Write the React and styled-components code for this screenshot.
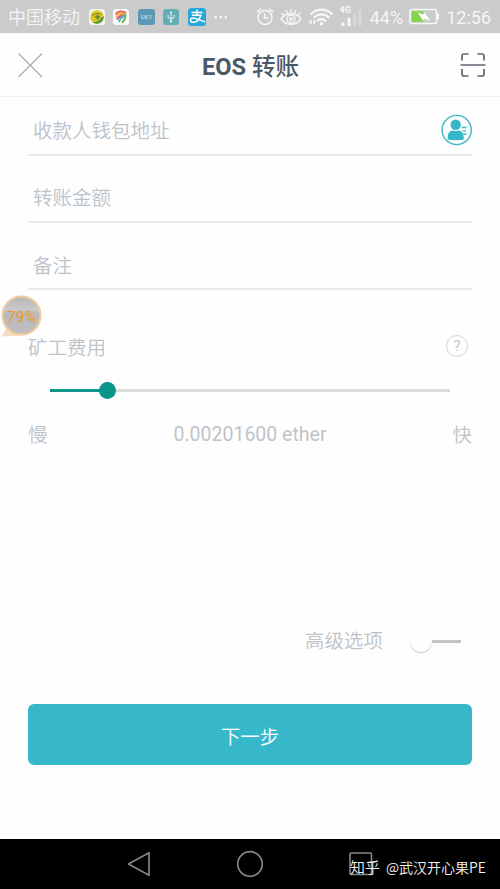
import React, { useState } from 'react';
import styled, { createGlobalStyle } from 'styled-components';

const GlobalStyle = createGlobalStyle`
  * {
    box-sizing: border-box;
  }

  body {
    margin: 0;
    background-color: #fefefe;
    font-family: Roboto, 'Noto Sans CJK SC', sans-serif;
  }
`;

const Screen = styled.div`
  position: relative;
  display: flex;
  flex-direction: column;
  width: 500px;
  height: 889px;
  overflow: hidden;
  background-color: #fefefe;
`;

const StatusBar = styled.div`
  display: flex;
  justify-content: space-between;
  height: 33px;
  padding: 0 9px 0 8px;
  background-color: #cbcbcb;
  color: #f5f5f5;
  font-size: 18px;
  line-height: 34px;
  white-space: nowrap;
`;

const StatusGroup = styled.div`
  display: flex;
  align-items: center;
  gap: ${(props) => props.$gap}px;
`;

const StatusText = styled.span`
  height: 33px;
  padding-top: ${(props) => props.$top || 0}px;
  font-weight: ${(props) => props.$weight || 400};
`;

const Header = styled.header`
  display: flex;
  align-items: center;
  justify-content: space-between;
  height: 64px;
  padding: 0 14px 0 17px;
  border-bottom: 1px solid #f0f0f0;
`;

const Title = styled.h1`
  margin: 0;
  padding: 4px 2px 0 0;
  color: #4a5867;
  font-size: 23.6px;
  font-weight: 700;
  line-height: 34px;
`;

const TitleText = styled.span`
  font-weight: 500;
`;

const IconButton = styled.button`
  display: flex;
  padding: 0;
  border: none;
  background: none;
  cursor: pointer;
`;

const Form = styled.form`
  display: flex;
  flex-direction: column;
  flex: 1;
  padding: 0 28px;
`;

const FieldRow = styled.div`
  display: flex;
  align-items: center;
  height: ${(props) => props.$height}px;
  padding: ${(props) => props.$top || 18}px 0 0 5px;
  border-bottom: 2px solid #e9eaec;
`;

const InputField = styled.input`
  flex: 1;
  min-width: 0;
  height: 32px;
  padding: 2px 0 0;
  border: none;
  outline: none;
  background: transparent;
  color: #465565;
  font-family: inherit;
  font-size: 19.5px;

  &::placeholder {
    color: #bac2ca;
    font-weight: 350;
    opacity: 1;
  }
`;

const FeeHeader = styled.div`
  display: flex;
  align-items: center;
  justify-content: space-between;
  height: 30px;
  margin-top: 42px;
  padding-right: 4px;
`;

const Label = styled.span`
  color: #bfc3c8;
  font-size: 19.5px;
  font-weight: ${(props) => props.$weight || 350};
  line-height: 30px;
  padding-top: ${(props) => props.$top || 0}px;
`;

const HelpButton = styled.button`
  display: flex;
  align-items: center;
  justify-content: center;
  width: 22px;
  height: 22px;
  margin-top: -3px;
  padding: 0;
  border: 1px solid #d3d5d7;
  border-radius: 50%;
  background: none;
  color: #c4c7ca;
  font-family: inherit;
  font-size: 15px;
  line-height: 20px;
`;

const Slider = styled.div`
  display: flex;
  align-items: center;
  height: 18px;
  margin: 19px 22px 0;
`;

const SliderFill = styled.div`
  height: 3px;
  background-color: #0b9488;
`;

const SliderThumb = styled.div`
  flex: none;
  width: 17px;
  height: 17px;
  margin: 0 -8px;
  border-radius: 50%;
  background-color: #0b9488;
  z-index: 1;
`;

const SliderRest = styled.div`
  flex: 1;
  height: 3px;
  background-color: #dadbdb;
`;

const FeeScale = styled.div`
  display: flex;
  justify-content: space-between;
  height: 32px;
  margin-top: 21px;
`;

const AdvancedRow = styled.div`
  display: flex;
  align-items: center;
  justify-content: flex-end;
  gap: 27px;
  height: 30px;
  margin-top: 174px;
  padding-right: 11px;
`;

const Toggle = styled.div`
  display: flex;
  align-items: center;
`;

const ToggleKnob = styled.div`
  width: 22px;
  height: 22px;
  border-radius: 50%;
  background-color: #fefefe;
  box-shadow: 0 1px 1px rgba(0, 0, 0, 0.22);
`;

const ToggleTrack = styled.div`
  width: 29px;
  height: 3px;
  background-color: #c4c4c4;
`;

const SubmitButton = styled.button`
  height: 61px;
  margin-top: 48px;
  padding: 1px 0 0;
  border: none;
  border-radius: 6px;
  background-color: #37b8ca;
  color: #fff;
  font-family: inherit;
  font-size: 19.4px;
  font-weight: 350;
  cursor: pointer;
`;

const NavBar = styled.nav`
  display: flex;
  align-items: center;
  justify-content: space-between;
  height: 50px;
  padding: 0 127px;
  background-color: #000;
`;

const Watermark = styled.div`
  position: absolute;
  right: 14px;
  bottom: 11px;
  display: flex;
  gap: 6px;
  color: #f4f4f4;
  font-family: 'Noto Sans CJK SC', sans-serif;
  font-size: 14px;
  font-weight: 350;
  line-height: 22px;
  white-space: nowrap;
`;

const WatermarkBrand = styled.span`
  font-size: 15px;
`;

const Bubble = styled.div`
  position: absolute;
  top: 295px;
  left: 1px;
  width: 42px;
  height: 42px;
`;

const BubbleText = styled.span`
  position: absolute;
  top: 12px;
  left: 6px;
  color: #f09a1c;
  font-size: 15.5px;
  line-height: 20px;
`;

const AppIcons = () => (
  <>
    <svg width="16" height="16" viewBox="0 0 16 16">
      <rect width="16" height="16" rx="3.5" fill="#f6f5ea" />
      <circle cx="8" cy="8" r="6.7" fill="#dcc62c" />
      <path d="M14.600 7A6.700 6.700 0 0 1 3 12.500C6 14 10.500 12 11.500 9.500z" fill="#4f9a48" />
      <path d="M3.500 7C5 4 10.500 3.300 12.500 6" fill="none" stroke="#8a9d2a" strokeWidth="1.300" />
      <path d="M8.500 5.500v5M6 8h5" stroke="#55832c" strokeWidth="1.600" />
    </svg>
    <svg width="16" height="16" viewBox="0 0 16 16" fill="none" strokeWidth="2">
      <rect width="16" height="16" rx="3.500" fill="#fafafa" />
      <path d="M2.500 5.500C5 2 9.500 1.500 13 4" stroke="#ee5f42" />
      <path d="M3 8c2-2.500 5.500-3.700 9-3" stroke="#f3b03c" />
      <path d="M4 10.500c1.500-2.500 4-4 7-4.500" stroke="#dc5078" />
      <path d="M6 13c.5-2.500 2.500-5 5.500-6.500" stroke="#4fb2d8" />
      <path d="M9 13.500c2-1.500 3.500-4.500 3.500-8.500" stroke="#62b950" />
    </svg>
    <svg width="17" height="16" viewBox="0 0 17 16">
      <rect width="17" height="16" rx="3" fill="#5b99b9" />
      <text x="8.500" y="9.900" textAnchor="middle" fontSize="5.800" fontFamily="Roboto" fontWeight="700" fill="#c5dfea">LV.1</text>
    </svg>
    <svg width="16" height="16" viewBox="0 0 16 16" fill="none" stroke="#e8f5f5">
      <rect width="16" height="16" rx="3" fill="#62adb3" stroke="none" />
      <path d="M8 3.500v8.500M5 6v2.500l3 1.500 3-1.500V6" />
      <path d="M8 2l1.300 2H6.700z" fill="#e8f5f5" stroke="none" />
      <circle cx="8" cy="12.500" r="1.100" fill="#e8f5f5" stroke="none" />
    </svg>
    <svg width="18" height="18" viewBox="0 0 18 18" fill="none" stroke="#fff" strokeLinecap="round">
      <rect width="18" height="18" rx="3.500" fill="#26a8dc" stroke="none" />
      <path d="M4 4.500h10M9 2.200v5M4.500 7.300h8.300c-.8 3.200-3.600 7-7 7-4.600 0-4.200-4.300-.6-4.300 3.200 0 6.300 2.400 11.300 3.700" strokeWidth="1.500" />
    </svg>
    <svg width="15" height="4" viewBox="0 0 15 4" fill="#f4f4f4">
      <rect x="0.500" y="1" width="2.300" height="2.300" />
      <rect x="5.500" y="1" width="2.300" height="2.300" />
      <rect x="10.500" y="1" width="2.300" height="2.300" />
    </svg>
  </>
);

const AlarmIcon = () => (
  <svg width="18" height="18" viewBox="0 0 18 18" fill="none" stroke="#f7f7f7" strokeWidth="1.500" strokeLinecap="round">
    <circle cx="9" cy="9.500" r="7" />
    <path d="M8.500 6v4h3.500M1.500 3.700l3-2.500M16.500 3.700l-3-2.500" />
  </svg>
);

const EyeIcon = () => (
  <svg width="22" height="18" viewBox="0 0 22 18" fill="none" stroke="#f7f7f7" strokeWidth="1.400" strokeLinecap="round">
    <path d="M1 11c5-7 15-7 20 0-5 7-15 7-20 0z" />
    <circle cx="11" cy="11" r="4" />
    <circle cx="11" cy="11" r="1.300" />
    <path d="M2 5.500l2 2M6.300 2.700l1.100 2.600M11 1.500v3M15.700 2.700l-1.100 2.600M20 5.500l-2 2" />
  </svg>
);

const WifiIcon = () => (
  <svg width="26" height="20" viewBox="0 0 26 20" fill="none" stroke="#f7f7f7" strokeWidth="2.200">
    <path d="M2.500 7.500c6.500-6.500 16-6.500 22 0M5.700 11c4.600-4.800 11-4.800 15.500 0M9 14.300c2.600-2.800 6.400-2.800 9 0" />
    <circle cx="13.500" cy="16.800" r="1.700" fill="#f7f7f7" stroke="none" />
    <path d="M3.700 12L1 15l2.700 3zM5.300 12L8 15l-2.700 3z" fill="#f7f7f7" stroke="none" />
  </svg>
);

const SignalIcon = () => (
  <svg width="24" height="24" viewBox="0 0 24 24" fill="#f7f7f7">
    <text x="-.5" y="7.500" fontSize="9" fontFamily="Roboto" fontWeight="700">4G</text>
    <rect x="1.500" y="17.500" width="3" height="3.500" />
    <rect x="7.500" y="13" width="3" height="8" />
    <rect x="13" y="8.500" width="3" height="12.500" opacity="0.300" />
    <rect x="18.500" y="4.500" width="3" height="16.500" opacity="0.300" />
  </svg>
);

const BatteryIcon = () => (
  <svg width="31" height="17" viewBox="0 0 31 17">
    <rect x="1" y="1.500" width="26.500" height="14" rx="1.500" fill="none" stroke="#f7f7f7" strokeWidth="1.700" />
    <rect x="2.700" y="3.200" width="11.800" height="10.600" fill="#83d64b" />
    <rect x="28" y="5.500" width="2" height="6" fill="#f7f7f7" />
    <path d="M8.500 4.500l6 2 .8-2.200 6.200 8.700-6.200-2.600-1 2.300z" fill="#fff" />
  </svg>
);

const CloseIcon = () => (
  <svg width="26" height="26" viewBox="0 0 26 26" stroke="#a9a9a9" strokeWidth="1.100">
    <path d="M1.500 1.500l23.500 23.500M25 1.500L1.500 25" />
  </svg>
);

const ScanIcon = () => (
  <svg width="26" height="26" viewBox="0 0 26 26" fill="none" stroke="#5c6672" strokeWidth="1.700">
    <path d="M2 8.500V4q0-2 2-2h4.500M17.500 2H22q2 0 2 2v4.500M24 17v5q0 2-2 2h-4.500M8.500 24H4q-2 0-2-2v-5M.5 13h25" />
  </svg>
);

const ContactIcon = () => (
  <svg width="32" height="32" viewBox="0 0 32 32">
    <circle cx="16.700" cy="16" r="14.600" fill="#fdfefe" stroke="#40b7c5" strokeWidth="1.400" />
    <circle cx="15.700" cy="10.700" r="5.200" fill="#35b6c6" />
    <path d="M7.700 25.500v-2.500c0-3.800 2.500-6.500 5.300-6.500 1.700.8 3.700.8 5.400 0 2.800 0 5.300 2.700 5.300 6.500v2.500q-8 1.500-16 0z" fill="#35b6c6" />
    <path d="M21.500 13.500h5M22.500 16.800h3.500M23.300 20h3.200" stroke="#40b7c5" strokeWidth="1.300" />
  </svg>
);

const BubbleShape = () => (
  <svg width="42" height="42" viewBox="0 0 42 42">
    <defs>
      <linearGradient id="bubble" x1="0" y1="0" x2="0" y2="1">
        <stop offset="0" stopColor="#b6b6b8" />
        <stop offset="0.350" stopColor="#c9c9cb" />
        <stop offset="0.450" stopColor="#b9b9bb" />
        <stop offset="1" stopColor="#bebec0" />
      </linearGradient>
    </defs>
    <path d="M.5 41.500L7 31l13 9.500z" fill="#f4dcc2" />
    <circle cx="20.500" cy="20.500" r="19" fill="url(#bubble)" stroke="#f2cb99" strokeWidth="2" />
  </svg>
);

const NavIcons = () => (
  <>
    <svg width="24" height="26" viewBox="0 0 24 26" fill="none" stroke="#858585" strokeWidth="1.700" strokeLinejoin="round">
      <path d="M22 1.700v22.600L1.500 13z" />
    </svg>
    <svg width="28" height="28" viewBox="0 0 28 28" fill="none" stroke="#858585" strokeWidth="1.700">
      <circle cx="14" cy="14" r="12.300" />
    </svg>
    <svg width="24" height="24" viewBox="0 0 24 24" fill="none" stroke="#858585" strokeWidth="1.600">
      <rect x="1" y="1" width="21.500" height="21.500" rx="1" />
    </svg>
  </>
);

const App = () => {
  const [formData, setFormData] = useState({ address: '', amount: '', memo: '' });
  const feeLevel = 14.3;

  // Handle input changes
  const handleChange = (e) => {
    setFormData({ ...formData, [e.target.name]: e.target.value });
  };

  return (
    <Screen>
      <GlobalStyle />
      <StatusBar>
        <StatusGroup $gap={8.5}>
          <StatusText $weight={350} $top={1}>中国移动</StatusText>
          <AppIcons />
        </StatusGroup>
        <StatusGroup $gap={6}>
          <AlarmIcon />
          <EyeIcon />
          <WifiIcon />
          <SignalIcon />
          <StatusText $top={1}>44%</StatusText>
          <BatteryIcon />
          <StatusText $top={1}>12:56</StatusText>
        </StatusGroup>
      </StatusBar>

      <Header>
        <IconButton type="button">
          <CloseIcon />
        </IconButton>
        <Title>
          EOS <TitleText>转账</TitleText>
        </Title>
        <IconButton type="button">
          <ScanIcon />
        </IconButton>
      </Header>

      <Form onSubmit={(e) => e.preventDefault()}>
        <FieldRow $height={59} $top={9}>
          <InputField
            type="text"
            name="address"
            placeholder="收款人钱包地址"
            value={formData.address}
            onChange={handleChange}
          />
          <IconButton type="button">
            <ContactIcon />
          </IconButton>
        </FieldRow>
        <FieldRow $height={67}>
          <InputField
            type="text"
            name="amount"
            placeholder="转账金额"
            value={formData.amount}
            onChange={handleChange}
          />
        </FieldRow>
        <FieldRow $height={67} $top={19}>
          <InputField
            type="text"
            name="memo"
            placeholder="备注"
            value={formData.memo}
            onChange={handleChange}
          />
        </FieldRow>

        <FeeHeader>
          <Label $top={4}>矿工费用</Label>
          <HelpButton type="button">?</HelpButton>
        </FeeHeader>
        <Slider>
          <SliderFill style={{ width: `${feeLevel}%` }} />
          <SliderThumb />
          <SliderRest />
        </Slider>
        <FeeScale>
          <Label $top={1}>慢</Label>
          <Label $weight={400}>0.00201600 ether</Label>
          <Label $top={1}>快</Label>
        </FeeScale>

        <AdvancedRow>
          <Label $top={2}>高级选项</Label>
          <Toggle>
            <ToggleKnob />
            <ToggleTrack />
          </Toggle>
        </AdvancedRow>

        <SubmitButton type="submit">下一步</SubmitButton>
      </Form>

      <NavBar>
        <NavIcons />
      </NavBar>

      <Bubble>
        <BubbleShape />
        <BubbleText>79%</BubbleText>
      </Bubble>
      <Watermark>
        <WatermarkBrand>知乎</WatermarkBrand>
        <span>@武汉开心果PE</span>
      </Watermark>
    </Screen>
  );
};

export default App;
